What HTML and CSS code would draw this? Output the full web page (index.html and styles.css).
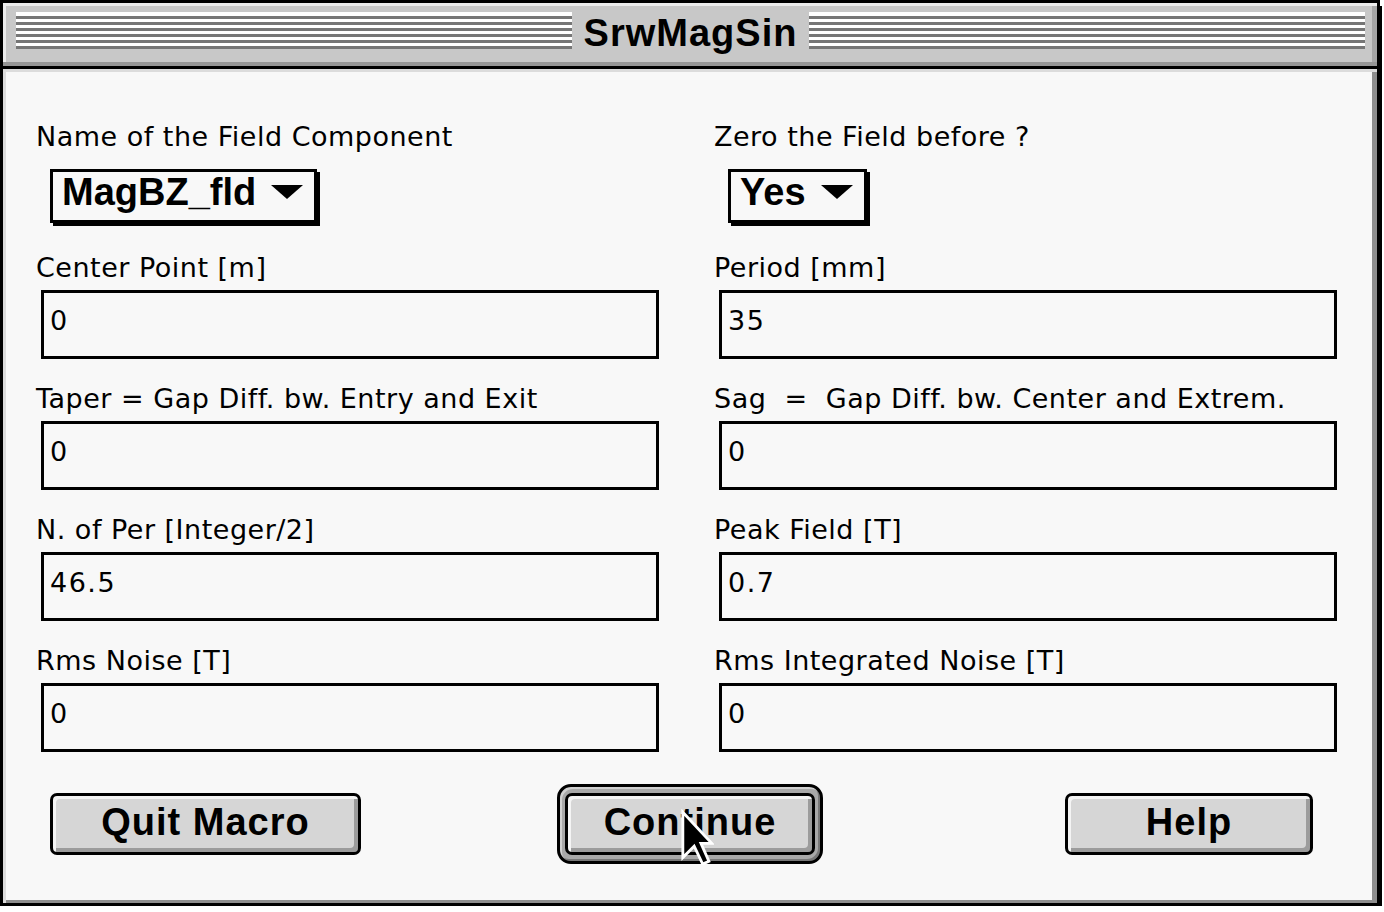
FILE: index.html
```html
<!DOCTYPE html>
<html lang="en">
<head>
    <meta charset="UTF-8">
    <meta name="viewport" content="width=device-width, initial-scale=1.0">
    <title>SrwMagSin</title>
    <link rel="stylesheet" href="styles.css">
</head>
<body>
    <div class="window">
        <div class="titlebar">
            <div class="stripes"></div>
            <div class="title">SrwMagSin</div>
            <div class="stripes"></div>
        </div>

        <div class="content">
            <div class="form-grid">
                <div class="group popup-group">
                    <div class="label">Name of the Field Component</div>
                    <div class="popup">
                        <span>MagBZ_fld</span>
                        <svg class="arrow" width="32" height="14" viewBox="0 0 32 14"><polygon points="0,0 32,0 16,14" fill="#000"/></svg>
                    </div>
                </div>
                <div class="group popup-group">
                    <div class="label">Zero the Field before ?</div>
                    <div class="popup">
                        <span>Yes</span>
                        <svg class="arrow" width="32" height="14" viewBox="0 0 32 14"><polygon points="0,0 32,0 16,14" fill="#000"/></svg>
                    </div>
                </div>

                <div class="group">
                    <div class="label">Center Point [m]</div>
                    <div class="field">0</div>
                </div>
                <div class="group">
                    <div class="label">Period [mm]</div>
                    <div class="field">35</div>
                </div>

                <div class="group">
                    <div class="label">Taper = Gap Diff. bw. Entry and Exit</div>
                    <div class="field">0</div>
                </div>
                <div class="group">
                    <div class="label">Sag  =  Gap Diff. bw. Center and Extrem.</div>
                    <div class="field">0</div>
                </div>

                <div class="group">
                    <div class="label">N. of Per [Integer/2]</div>
                    <div class="field">46.5</div>
                </div>
                <div class="group">
                    <div class="label">Peak Field [T]</div>
                    <div class="field">0.7</div>
                </div>

                <div class="group">
                    <div class="label">Rms Noise [T]</div>
                    <div class="field">0</div>
                </div>
                <div class="group">
                    <div class="label">Rms Integrated Noise [T]</div>
                    <div class="field">0</div>
                </div>
            </div>

            <div class="buttons">
                <button class="btn btn-quit">Quit Macro</button>
                <div class="default-ring">
                    <button class="btn btn-continue">Continue</button>
                </div>
                <button class="btn btn-help">Help</button>
            </div>
        </div>
    </div>

    <!-- mouse pointer over the Continue button -->
    <svg class="cursor" width="34" height="56" viewBox="-1 -1 12 19.5">
        <path d="M0 0 V16 L4 12 L7 18.3 L9.2 17.3 L6.4 11 H10.2 Z" fill="#000" stroke="#fff" stroke-width="1" stroke-linejoin="miter"/>
    </svg>
</body>
</html>
```

FILE: styles.css
```css
* {
    margin: 0;
    padding: 0;
    box-sizing: border-box;
}

body {
    background-color: #fff;
    font-family: 'DejaVu Sans', sans-serif;
    color: #000;
}

.window {
    width: 1380px;
    height: 906px;
    border: 3px solid #000;
    box-shadow: 2px 6px 0 #000;
    display: flex;
    flex-direction: column;
    background-color: #f8f8f8;
}

/* platinum title bar */
.titlebar {
    height: 63px;
    flex: none;
    display: flex;
    align-items: flex-start;
    padding: 9px 12px 0 13px;
    background-color: #c8c8c8;
    border-bottom: 4px solid #969696;
    box-shadow: inset 3px 3px 0 #ececec, inset -5px 0 0 #a6a6a6;
}

.stripes {
    flex: 1;
    height: 37px;
    border-top: 1px solid #fff;
    background: repeating-linear-gradient(to bottom, #fff 0, #fff 3px, #767676 3px, #767676 6px);
}

.title {
    flex: none;
    padding: 0 12px;
    font-family: 'Liberation Sans', Arial, sans-serif;
    font-weight: bold;
    font-size: 38px;
    letter-spacing: 1px;
    line-height: 43px;
}

.content {
    flex: 1;
    border-top: 3px solid #000;
    padding: 52px 40px 0 33px;
    box-shadow: inset 3px 3px 0 #dcdcdc, inset -5px -3px 0 #8e8e8e;
}

.form-grid {
    display: grid;
    grid-template-columns: 623px 623px;
    column-gap: 55px;
}

.group {
    margin-bottom: 24px;
}

.popup-group {
    margin-bottom: 29px;
}

.label {
    font-size: 27px;
    line-height: 31px;
    letter-spacing: 0.5px;
    white-space: pre;
    margin-bottom: 7px;
}

.popup-group .label {
    margin-bottom: 17px;
}

.popup {
    display: inline-flex;
    align-items: flex-start;
    gap: 15px;
    height: 54px;
    margin-left: 14px;
    padding: 0 11px 0 9px;
    border: 3px solid #000;
    box-shadow: 3px 3px 0 #000;
    background-color: #f8f8f8;
    font-family: 'Liberation Sans', Arial, sans-serif;
    font-weight: bold;
    font-size: 38px;
    line-height: 40px;
}

.popup .arrow {
    margin-top: 13px;
}

.field {
    width: 618px;
    height: 69px;
    margin-left: 5px;
    border: 3px solid #000;
    background-color: #f8f8f8;
    padding: 12px 6px 0;
    font-size: 27px;
    line-height: 31px;
    letter-spacing: 1.5px;
}

.buttons {
    display: flex;
    align-items: center;
    margin-top: 8px;
}

.btn {
    height: 62px;
    border: 3px solid #000;
    border-radius: 7px;
    background-color: #d6d6d6;
    box-shadow: inset 3px 3px 0 #f4f4f4, inset -4px -4px 0 #9c9c9c;
    font-family: 'Liberation Sans', Arial, sans-serif;
    font-weight: bold;
    font-size: 38px;
    letter-spacing: 1px;
    line-height: 52px;
    padding-bottom: 4px;
    color: #000;
    text-align: center;
}

.btn-quit {
    width: 311px;
    margin-left: 14px;
}

.default-ring {
    margin-left: 196px;
    padding: 6px 5px;
    border: 3px solid #000;
    border-radius: 14px;
    background-color: #a8a8a8;
    box-shadow: inset 2px 2px 0 #d0d0d0, inset -2px -2px 0 #777;
}

.btn-continue {
    display: block;
    width: 250px;
}

.btn-help {
    width: 248px;
    margin-left: 242px;
}

.cursor {
    position: absolute;
    left: 680px;
    top: 809px;
}
```
